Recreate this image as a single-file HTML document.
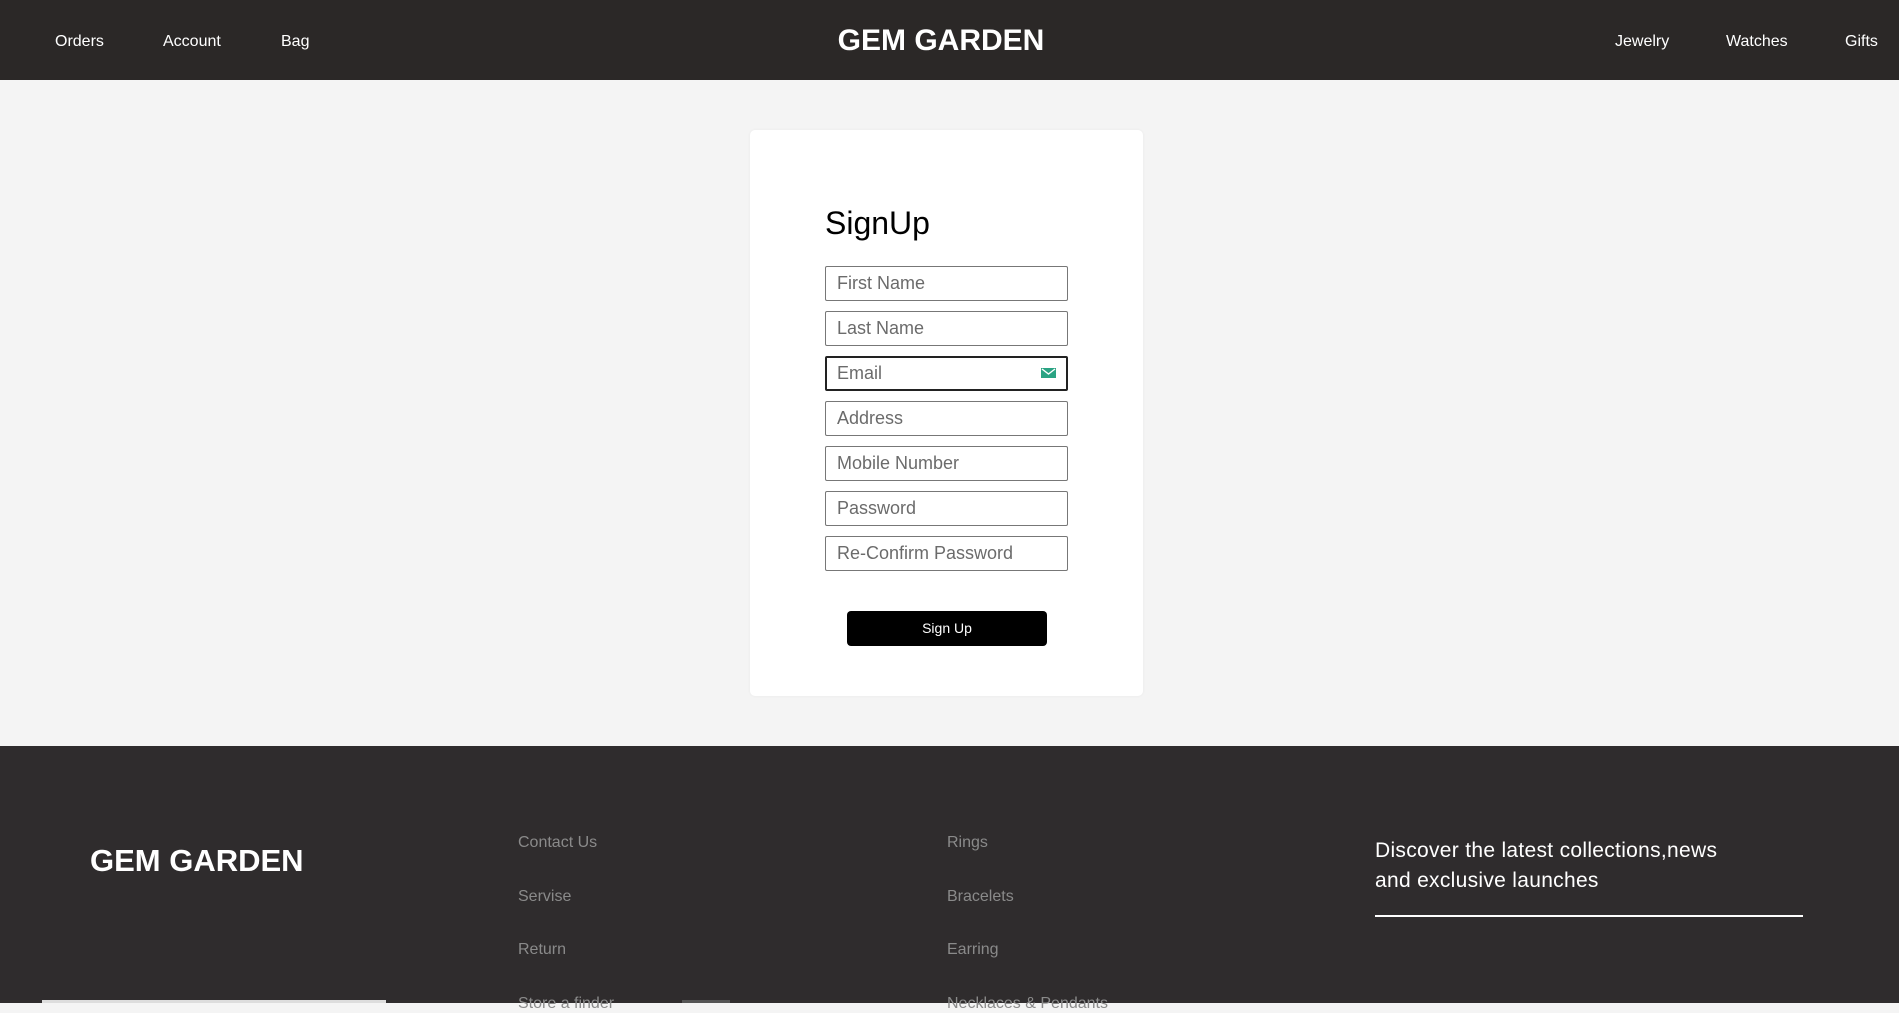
<!DOCTYPE html>
<html><head><style>
*{margin:0;padding:0;box-sizing:border-box}
body{width:1899px;height:1003px;overflow:hidden;background:#f4f4f4;font-family:"Liberation Sans",sans-serif;position:relative}
.hdr{position:absolute;left:0;top:0;width:1899px;height:80px;background:#2b2827;color:#fff}
.hdr a{position:absolute;top:33px;font-size:16px;color:#fff;text-decoration:none}
.logo{position:absolute;left:0;width:1882px;text-align:center;top:24px;font-size:30px;font-weight:bold}
.card{position:absolute;left:750px;top:130px;width:393px;height:566px;background:#fff;border-radius:5px;box-shadow:0 0 3px rgba(0,0,0,.05)}
h1{position:absolute;left:825px;top:205px;font-size:32px;font-weight:normal;color:#000}
.in{position:absolute;left:825px;width:243px;height:35px;border:1px solid #777;border-radius:2px;font-size:18px;color:#6b6b6b;padding:6px 11px;background:#fff}
.btn{position:absolute;left:847px;top:611px;width:200px;height:35px;background:#000;border-radius:4px;color:#fff;font-size:14px;text-align:center;line-height:35px}
.ftr{position:absolute;left:0;top:746px;width:1899px;height:257px;background:#2f2c2d}
.fl{position:absolute;color:#8a8a8a;font-size:16px}
</style></head><body>
<div class="hdr">
<a style="left:55px">Orders</a><a style="left:163px">Account</a><a style="left:281px">Bag</a>
<div class="logo">GEM GARDEN</div>
<a style="left:1615px">Jewelry</a><a style="left:1726px">Watches</a><a style="left:1845px">Gifts</a>
</div>
<div class="card"></div>
<h1>SignUp</h1>
<div class="in" style="top:266px">First Name</div>
<div class="in" style="top:311px">Last Name</div>
<div class="in" style="top:356px;border:2px solid #222;padding:5px 10px">Email
<svg style="position:absolute;right:10px;top:10px" width="15" height="12" viewBox="0 0 15 12"><rect width="15" height="10" fill="#2aa383"/><path d="M1 1 L7.5 6 L14 1" stroke="#fff" stroke-width="1.4" fill="none"/></svg></div>
<div class="in" style="top:401px">Address</div>
<div class="in" style="top:446px">Mobile Number</div>
<div class="in" style="top:491px">Password</div>
<div class="in" style="top:536px">Re-Confirm Password</div>
<div class="btn">Sign Up</div>
<div class="ftr">
<div style="position:absolute;left:90px;top:97px;color:#fff;font-size:31px;font-weight:bold">GEM GARDEN</div>
<div class="fl" style="left:518px;top:88px">Contact Us</div>
<div class="fl" style="left:518px;top:142px">Servise</div>
<div class="fl" style="left:518px;top:195px">Return</div>
<div class="fl" style="left:518px;top:249px">Store a finder</div>
<div class="fl" style="left:947px;top:88px">Rings</div>
<div class="fl" style="left:947px;top:142px">Bracelets</div>
<div class="fl" style="left:947px;top:195px">Earring</div>
<div class="fl" style="left:947px;top:249px">Necklaces &amp; Pendants</div>
<div style="position:absolute;left:1375px;top:90px;color:#fff;font-size:21px;line-height:30px;letter-spacing:0.3px">Discover the latest collections,news<br>and exclusive launches</div>
<div style="position:absolute;left:1375px;top:169px;width:428px;height:2px;background:#fff"></div>
<div style="position:absolute;left:42px;top:254px;width:344px;height:3px;background:#ddd"></div>
<div style="position:absolute;left:682px;top:254px;width:48px;height:3px;background:#555"></div>
</div>
</body></html>
